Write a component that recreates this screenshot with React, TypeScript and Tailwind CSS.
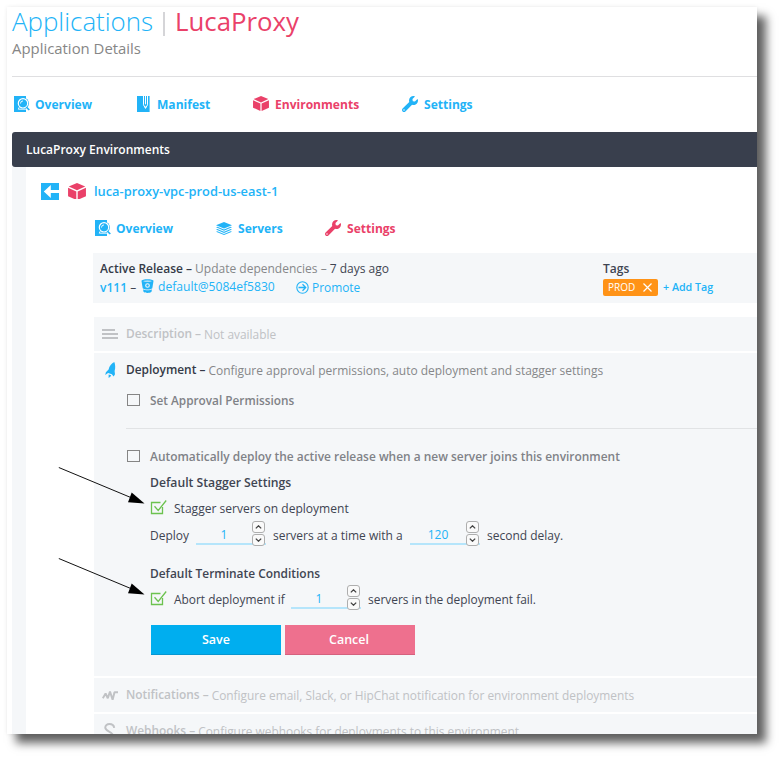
import type { ReactNode } from "react";
import { FaWrench } from "react-icons/fa";

function DocSearchIcon() {
  return (
    <svg width="16" height="16" viewBox="0 0 16 16" className="shrink-0">
      <path d="M0 0h12v16H0z" fill="#22b3f7" />
      <circle cx="9" cy="7.300" r="5.900" fill="#22b3f7" />
      <circle cx="9" cy="7.300" r="4.700" fill="none" stroke="#fff" strokeWidth="1.200" />
      <path d="M6.500 7.500A2.600 2.600 0 0 1 9 4.900" fill="none" stroke="#fff" strokeWidth="0.900" />
      <path d="M12.300 11.200L15.300 14" fill="none" stroke="#22b3f7" strokeWidth="1.700" />
      <path d="M5.200 11.200L4.300 13.200H12.400" fill="none" stroke="#fff" strokeWidth="0.900" />
    </svg>
  );
}

function ManifestIcon() {
  return (
    <svg width="13" height="16" viewBox="0 0 13 16" className="shrink-0">
      <rect width="12.600" height="16" fill="#22b3f7" />
      <path d="M6.500 0v8.800l2 3.600 2-3.600V0M8.500 0v8.300" fill="none" stroke="#fff" strokeWidth="1" />
      <path d="M7.500 10.600h2l-1 2z" fill="#fff" />
    </svg>
  );
}

function CubeIcon({ size }: { size: number }) {
  return (
    <svg width={size} height={size * 0.94} viewBox="0 0 18 17" className="shrink-0" fill="#ea4169">
      <path d="M9 0l8.300 3.500L9 7.300.7 3.500z" />
      <path d="M0 4.800l8.300 3.800V17L0 13.200z" />
      <path d="M18 4.800L9.700 8.600V17L18 13.200z" />
    </svg>
  );
}

function BackIcon() {
  return (
    <svg width="18" height="17" viewBox="0 0 18 17" className="shrink-0">
      <rect width="18" height="17" fill="#22b3f7" />
      <path d="M2.800 8.500L9.800 2v4.900H18v3.200H9.800V15z" fill="#fff" />
    </svg>
  );
}

function LayersIcon() {
  return (
    <svg width="16" height="13" viewBox="0 0 15 13" preserveAspectRatio="none" className="shrink-0" fill="#22b3f7">
      <path d="M7.500 0L15 3.300 7.500 6.600 0 3.300z" />
      <path d="M0 5.300l1.300-.5 6.200 2.800 6.200-2.800 1.300.5-7.500 3.400zM0 7.500l1.300-.5 6.200 2.800L13.700 7l1.300.5-7.500 3.400zM0 9.700l1.300-.5L7.500 12l6.200-2.800 1.300.5L7.500 13z" />
    </svg>
  );
}

function BucketIcon() {
  return (
    <svg width="13" height="14" viewBox="0 0 13 14" className="shrink-0">
      <path d="M.5 2C.5-.2 12.500-.2 12.500 2l-1.200 7.300c-1.500 1.600-8.100 1.600-9.600 0z" fill="#22b3f7" />
      <path d="M2 10.200c2 1.300 7 1.300 9 0l-.5 2.500c-1.500 1.600-6.500 1.600-8 0z" fill="#22b3f7" />
      <ellipse cx="6.500" cy="2.100" rx="4.300" ry=".7" fill="#d6eefa" />
      <circle cx="6.500" cy="6.500" r="1.800" fill="none" stroke="#f5f7f9" strokeWidth="1.100" />
    </svg>
  );
}

function PromoteIcon() {
  return (
    <svg width="13" height="13" viewBox="0 0 13 13" className="shrink-0" fill="none" stroke="#22b3f7" strokeWidth="1.100">
      <circle cx="6.500" cy="6.500" r="5.700" />
      <path d="M2.500 6.500h7M6.500 3.300l3.200 3.200-3.200 3.200" strokeWidth="1.300" />
    </svg>
  );
}

function RocketIcon() {
  return (
    <svg width="11" height="16" viewBox="0 0 11 16" className="shrink-0" fill="#22b3f7">
      <path d="M9.300 0C6.500 1.300 4.300 4 3.600 7.500L.9 10.200.2 13l2.900-2 3.700 1.300 1.900 2.300 1.300-2.300-.4-3.300C10.600 6.300 10.300 2.500 9.300 0z" />
      <path d="M3.600 12.400l2.600.8-.9 1.500L3.600 16z" />
    </svg>
  );
}

function LinesIcon() {
  return (
    <svg width="16" height="10" viewBox="0 0 16 10" className="shrink-0" stroke="#c0c2c5" strokeWidth="2">
      <path d="M0 1h13M0 5h16M0 9h16" />
    </svg>
  );
}

function PulseIcon() {
  return (
    <svg width="16" height="11" viewBox="0 0 16 11" className="shrink-0" fill="none" stroke="#c0c2c5" strokeWidth="2" strokeLinejoin="bevel">
      <path d="M.8 8.300L3.600 3.500l2.200 4.800 2.200-6.800 2.600 8.300 1.900-7.600H16" />
    </svg>
  );
}

function HookIcon() {
  return (
    <svg width="12" height="16" viewBox="0 0 12 16" className="shrink-0" fill="none" stroke="#c0c2c5" strokeWidth="2">
      <path d="M10.200 4.800C9.500-.3 1-.2 1.300 4.700 1.500 8.500 8 8 9 12.500" />
    </svg>
  );
}

function Checkbox({ checked = false }: { checked?: boolean }) {
  return checked ? (
    <svg width="17" height="16" viewBox="0 0 17 16" className="shrink-0" fill="none" stroke="#6cc24f">
      <path d="M10.500 2.500H1.500v11h11V7" strokeWidth="1.300" />
      <path d="M4.500 6.300l3.700 4.200L16.200.500" strokeWidth="1.300" />
    </svg>
  ) : (
    <span className="h-3 w-[13px] shrink-0 border border-[#858585]" />
  );
}

function SpinButton({ up = false }: { up?: boolean }) {
  return (
    <span className="flex h-3 w-[13px] items-center justify-center rounded-[3px] border border-[#aeaeae] bg-[#fafafa]">
      <svg width="7" height="4" viewBox="0 0 7 4" fill="none" stroke="#444" strokeWidth="1.300">
        <path d={up ? "M.8 3.400L3.500.8l2.700 2.600" : "M.8.600l2.700 2.600L6.200.6"} />
      </svg>
    </span>
  );
}

function NumberField({ value }: { value: string }) {
  return (
    <span className="flex h-7 w-[70px] shrink-0 items-center border-b-2 border-[#b5e5fb] text-[#22b3f7]">
      <span className="mt-[9px] w-14 text-center">{value}</span>
      <span className="mt-[7px] flex flex-col gap-px">
        <SpinButton up />
        <SpinButton />
      </span>
    </span>
  );
}

function Tab({ icon, label, width, gap = "w-[22px]", active = false }: { icon: ReactNode; label: string; width: string; gap?: string; active?: boolean }) {
  return (
    <div className={`flex shrink-0 items-center font-bold ${width} ${active ? "text-[#ea4169]" : "text-[#22b3f7]"}`}>
      <span className={`flex items-center ${gap}`}>{icon}</span>
      <span className="mt-[2px] text-[12.050px]">{label}</span>
    </div>
  );
}

function SectionTitle({ icon, title, text, muted = false }: { icon: ReactNode; title: string; text: string; muted?: boolean }) {
  return (
    <div className="flex h-[34px] items-center">
      <span className="flex w-8 shrink-0 justify-center">{icon}</span>
      <span className={`mb-[3px] text-[11.900px] font-semibold ${muted ? "text-[#c0c2c5]" : "text-[#343a47]"}`}>{title} –</span>
      <span className={`ml-[3px] ${muted ? "mb-px text-[11.900px] text-[#c0c2c5]" : "mt-px text-[11.970px] text-[#868789]"}`}>{text}</span>
    </div>
  );
}

function Arrow({ place }: { place: string }) {
  return (
    <svg width="88" height="38" viewBox="0 0 88 38" className={`absolute ${place}`}>
      <path d="M.8.500L80 33.500" stroke="#111" strokeWidth="1" />
      <path d="M86.500 36.500L73.700 25.600 70 35.200z" fill="#000" />
    </svg>
  );
}

export default function App() {
  return (
    <div className="h-[757px] w-[780px] overflow-hidden bg-white pt-[7px] pl-[7px] font-['Open_Sans',sans-serif] text-xs leading-4 whitespace-nowrap text-[#3f4552]">
      <main className="relative h-[727px] w-[750px] bg-white shadow-[9px_9px_9px_rgba(0,0,0,0.62),0_0_4px_rgba(0,0,0,0.08)]">
        <div className="h-full pl-[5px]">
          <h1 className="flex h-[27px] items-center text-[26px] leading-[26px] font-light">
            <span className="w-[151px] text-[25.900px] text-[#22b3f7]">Applications</span>
            <span className="mt-[6px] mr-[10px] h-6 w-[2px] bg-[#d5d5d8]" />
            <span className="text-[25.800px] font-normal text-[#ea4169]">LucaProxy</span>
          </h1>
          <p className="mt-1 flex h-5 items-center text-[14.900px] text-[#868686]">Application Details</p>
          <hr className="mt-[18px] border-[#dfdfe1]" />

          <nav className="mt-[11px] flex h-8 items-center pl-[2px]">
            <Tab width="w-[123px]" gap="w-[21px]" icon={<DocSearchIcon />} label="Overview" />
            <Tab width="w-[116px]" gap="w-[20px]" icon={<ManifestIcon />} label="Manifest" />
            <Tab width="w-[149px]" icon={<CubeIcon size={16} />} label="Environments" active />
            <Tab width="w-auto" icon={<FaWrench size={16} />} label="Settings" />
          </nav>

          <h2 className="mt-3 flex h-[35px] items-center rounded-l-[3px] bg-[#393f4d] pl-[14px] font-semibold text-white">
            LucaProxy Environments
          </h2>

          <div className="h-[567px] overflow-hidden border-l-[14px] border-[#f5f7f9] pt-[14px]">
            <div className="flex h-5 items-center pl-[15px]">
              <BackIcon />
              <span className="mr-[7px] ml-[9px] flex w-[19px]"><CubeIcon size={18} /></span>
              <span className="text-[12.850px] font-semibold text-[#22b3f7]">luca-proxy-vpc-prod-us-east-1</span>
            </div>
            <nav className="mt-[11px] flex h-8 items-center pl-[69px]">
              <Tab width="w-[121px]" gap="w-[21px]" icon={<DocSearchIcon />} label="Overview" />
              <Tab width="w-[109px]" icon={<LayersIcon />} label="Servers" />
              <Tab width="w-auto" icon={<FaWrench size={16} />} label="Settings" active />
            </nav>

            <section className="mt-[9px] ml-[67px] flex h-[50px] bg-[#f5f7f9] pl-[7px]">
              <div className="w-[503px] shrink-0 pt-[7px]">
                <div className="flex h-[18px] items-center">
                  <b className="font-semibold text-[#343a47]">Active Release –</b>
                  <span className="mx-[3px] text-[#868789]">Update dependencies –</span>
                  <span>7 days ago</span>
                </div>
                <div className="flex h-5 items-center text-[#22b3f7]">
                  <span className="w-[41px]"><b className="font-semibold">v111</b> <span className="text-[#3f4552]">–</span></span>
                  <span className="mb-[4px] flex"><BucketIcon /></span>
                  <span className="mb-[2px] ml-1 w-[138px] text-[12.100px]">default@5084ef5830</span>
                  <span className="mb-px"><PromoteIcon /></span>
                  <span className="mb-[2px] ml-[3px] text-[11.900px]">Promote</span>
                </div>
              </div>
              <div className="pt-[7px]">
                <div className="flex h-[18px] items-center font-semibold">Tags</div>
                <div className="mt-px flex h-[17px] items-center">
                  <span className="flex h-[17px] w-[55px] items-center justify-between rounded-[2px] bg-[#ff9317] pr-[6px] pb-px pl-[5px] text-[10px] text-white">
                    PROD
                    <svg width="9" height="9" viewBox="0 0 9 9" stroke="#fff" strokeWidth="1.200"><path d="M.5.500l8 8M8.500.5l-8 8" /></svg>
                  </span>
                  <span className="mb-[2px] ml-[5px] text-[10.700px] font-semibold text-[#22b3f7]">+ Add Tag</span>
                </div>
              </div>
            </section>

            <div className="mt-[14px] ml-[68px] flex flex-col gap-[2px]">
              <section className="bg-[#f5f7f9]">
                <SectionTitle muted icon={<LinesIcon />} title="Description" text="Not available" />
              </section>
              <section className="h-[323px] bg-[#f5f7f9]">
                <SectionTitle icon={<RocketIcon />} title="Deployment" text="Configure approval permissions, auto deployment and stagger settings" />
                <div className="pl-8">
                  <label className="mt-[3px] flex h-5 items-center gap-[10px] pl-px text-[11.800px] font-semibold text-[#808287]">
                    <Checkbox /><span>Set Approval Permissions</span>
                  </label>
                  <hr className="mt-[18px] border-[#e1e3e5]" />
                  <label className="mt-[17px] flex h-5 items-center gap-[10px] pl-px text-[11.930px] font-semibold text-[#808287]">
                    <Checkbox /><span>Automatically deploy the active release when a new server joins this environment</span>
                  </label>
                  <div className="pl-6">
                    <h3 className="mt-[7px] flex h-5 items-center text-[12.200px] font-semibold">Default Stagger Settings</h3>
                    <label className="mt-[5px] flex h-5 items-center gap-[7px]"><Checkbox checked /><span className="mt-[2px] text-[12.060px]">Stagger servers on deployment</span></label>
                    <div className="mt-[-1px] flex h-7 items-center">
                      <span className="mt-[9px] w-[46px]">Deploy</span>
                      <NumberField value="1" />
                      <span className="mt-[9px] ml-[7px] w-[137px]">servers at a time with a</span>
                      <NumberField value="120" />
                      <span className="mt-[9px] ml-[7px]">second delay.</span>
                    </div>
                    <h3 className="mt-[18px] flex h-5 items-center text-[11.930px] font-semibold">Default Terminate Conditions</h3>
                    <div className="mt-[-2px] flex h-7 items-center">
                      <span className="mt-[7px] flex w-[141px] items-center gap-[7px] text-[11.900px]"><Checkbox checked />Abort deployment if</span>
                      <NumberField value="1" />
                      <span className="mt-[7px] ml-[7px] text-[11.930px]">servers in the deployment fail.</span>
                    </div>
                    <div className="mt-4 flex gap-1 pl-px text-[12.500px] font-semibold text-white">
                      <button className="h-[30px] w-[130px] border-b border-[#0797d1] bg-[#00aeef] pt-px">Save</button>
                      <button className="h-[30px] w-[130px] border-b border-[#d5617e] bg-[#ee708e] pt-px pr-[2px]">Cancel</button>
                    </div>
                  </div>
                </div>
              </section>
              <section className="bg-[#f5f7f9]">
                <SectionTitle muted icon={<PulseIcon />} title="Notifications" text="Configure email, Slack, or HipChat notification for environment deployments" />
              </section>
              <section className="bg-[#f5f7f9]">
                <SectionTitle muted icon={<HookIcon />} title="Webhooks" text="Configure webhooks for deployments to this environment" />
              </section>
            </div>
          </div>
        </div>
        <Arrow place="top-[460px] left-[51px]" />
        <Arrow place="top-[551px] left-[51px]" />
      </main>
    </div>
  );
}
